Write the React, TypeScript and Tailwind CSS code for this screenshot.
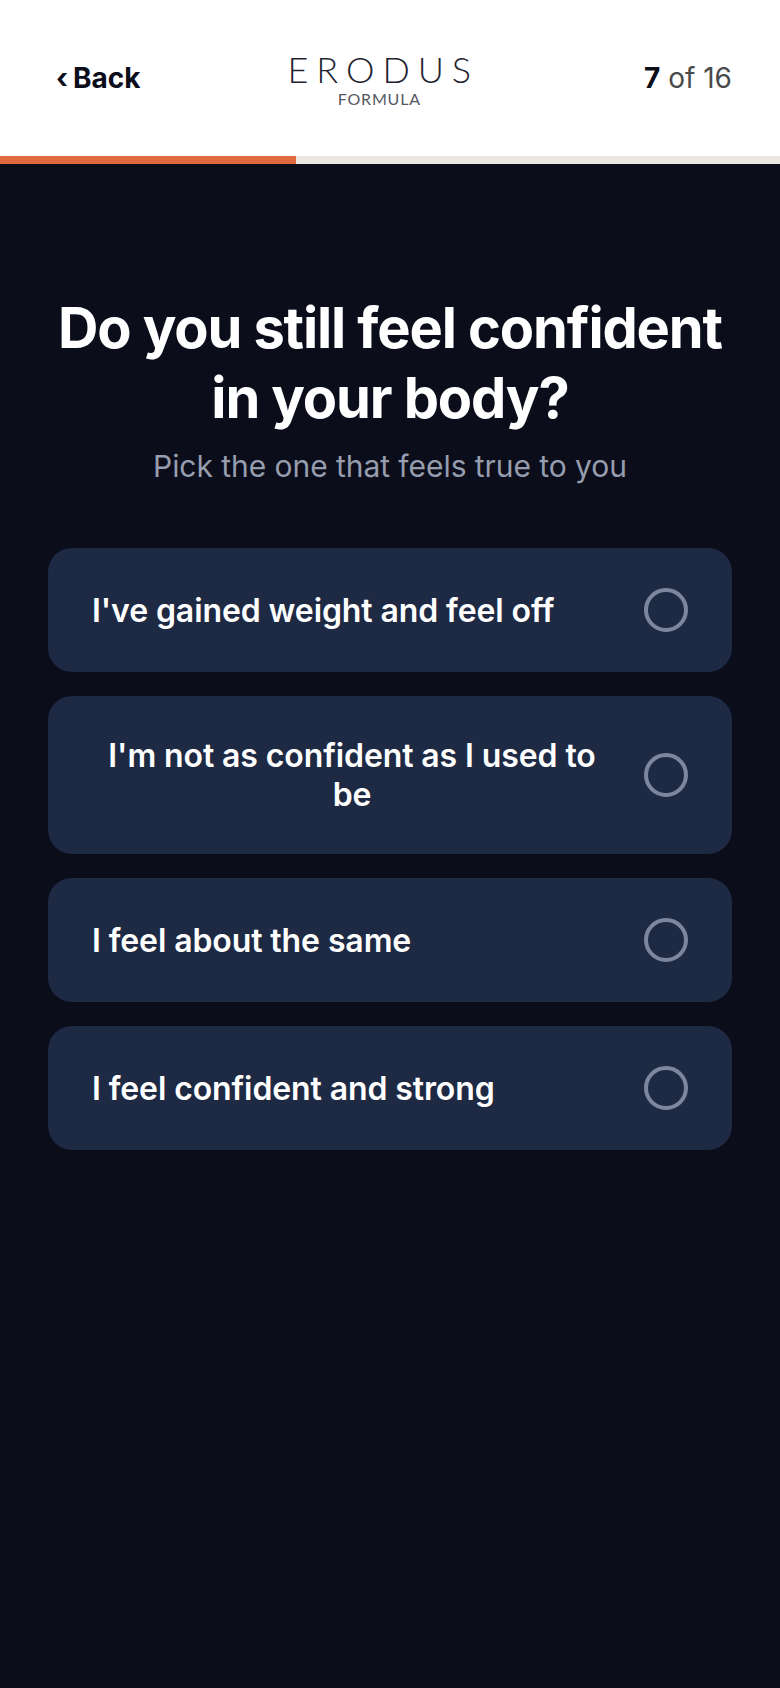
const options = [
  "I've gained weight and feel off",
  "I'm not as confident as I used to be",
  "I feel about the same",
  "I feel confident and strong",
];

const App = () => {
  return (
    <div className="min-h-[1688px] bg-[#0b0d1a] font-['Inter',sans-serif]">
      <header className="h-[156px] bg-white flex items-center justify-between pl-[56px] pr-[48px]">
        <button type="button" className="font-bold text-[28px] text-[#0b0d1a] flex items-center gap-[5px]">
          <span>‹</span>
          <span>Back</span>
        </button>
        <div className="flex flex-col items-center mr-[26px] text-[#1f2430] font-['Lato',sans-serif]">
          <span className="text-[36px] leading-[38px] font-light tracking-[0.22em] mr-[-0.22em] mt-[2px]">
            ERODUS
          </span>
          <span className="text-[16px] leading-[20px] tracking-[0.05em] mt-[1px] text-[#55585f]">
            FORMULA
          </span>
        </div>
        <div className="text-[28px] text-[#4a4a4a]">
          <span className="font-bold text-[#0b0d1a]">7</span> of 16
        </div>
      </header>

      <div className="h-2 bg-[#ebe6df]">
        <div className="h-full w-[296px] bg-[#e06a3f]" />
      </div>

      <main className="px-[48px] pt-[129px]">
        <h1 className="text-[56px] leading-[70px] font-bold text-white text-center tracking-[-0.02em]">
          Do you still feel confident
          <br />
          in your body?
        </h1>
        <p className="mt-[11px] text-[30px] leading-[44px] text-[#969dae] text-center tracking-[-0.05px]">
          Pick the one that feels true to you
        </p>

        <div className="mt-[60px] flex flex-col gap-6">
          {options.map((label) => (
            <button
              key={label}
              type="button"
              className="flex items-center justify-between gap-[32px] px-[44px] py-[40px] rounded-[24px] bg-[#1e2a44]"
            >
              <span className="text-[32px] leading-[39px] font-semibold text-white text-center tracking-[-0.1px]">
                {label}
              </span>
              <span className="shrink-0 w-[44px] h-[44px] rounded-full border-4 border-[#7c879f]" />
            </button>
          ))}
        </div>
      </main>
    </div>
  );
};

export default App;
